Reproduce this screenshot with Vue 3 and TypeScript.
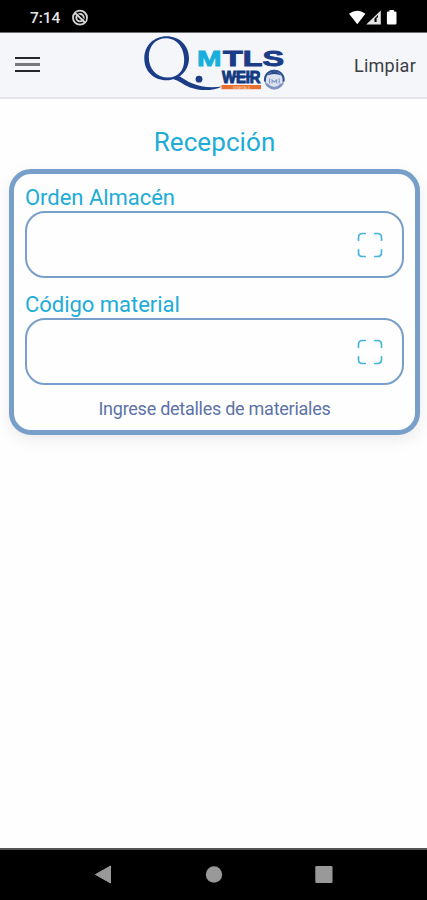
<script setup lang="ts">
import { ref } from 'vue'

interface Field {
  id: string
  label: string
}

const fields: Field[] = [
  { id: 'orden', label: 'Orden Almacén' },
  { id: 'codigo', label: 'Código material' },
]

const values = ref<Record<string, string>>({ orden: '', codigo: '' })

function clearFields(): void {
  values.value = { orden: '', codigo: '' }
}
</script>

<template>
  <div class="screen">
    <div class="status">
      <span class="clock">7:14</span>
      <svg class="status-badge" width="18" height="18" viewBox="0 0 18 18">
        <circle cx="9" cy="8.700" r="7" fill="none" stroke="#d6d6d6" stroke-width="1.800" />
        <circle cx="9" cy="8.700" r="3.700" fill="none" stroke="#d6d6d6" stroke-width="1.900" />
        <path d="M4 3.900L14 13.500" stroke="#d6d6d6" stroke-width="2" />
        <path d="M5.500 3.300L14.800 11.900" stroke="#000" stroke-width="0.900" />
      </svg>
      <svg class="status-icons" width="50" height="18" viewBox="0 0 50 18">
        <path d="M1 4.800Q9.300-1.200 17.400 4.800L9.300 15.200Z" fill="#fff" />
        <path d="M18.200 15.600L32.800 1.500V15.600Z" fill="#e2e2e2" />
        <path d="M26.500 13V9.500L30 6V8.500H28.600V13Z" fill="#000" />
        <path d="M41.500 1h4.400v1.400h1.200q1.400 0 1.400 1.400v10.400q0 1.400-1.400 1.400h-6.800q-1.400 0-1.400-1.400V3.800q0-1.400 1.400-1.400h1.200z" fill="#fff" />
      </svg>
    </div>

    <header class="toolbar">
      <button class="menu" aria-label="Menú">
        <span></span><span></span><span></span>
      </button>
      <svg class="logo" width="156" height="64" viewBox="136 33 156 64">
        <path
          fill="#1b3c87"
          fill-rule="evenodd"
          d="M166.500 36.200C179.500 36.200 189 45.500 189 58C189 71 179 80.300 166.500 80.300C153.500 80.300 144.300 71 144.300 58.500C144.300 45.500 154 36.200 166.500 36.200ZM166 38.200C155.500 38.200 148.800 46 148.800 57C148.800 69 156.500 77.600 168 77.600C178 77.600 184.200 70.500 184.200 60C184.200 47 176.500 38.200 166 38.200Z"
        />
        <path d="M174 77.500L180 76.500C188 82 200 89.500 222 86.500C212 91.500 200 90.800 190 87.500C183 84.500 179 80.500 174 79.500Z" fill="#1b3c87" />
        <circle cx="199" cy="79.200" r="3.400" fill="#1b3c87" />
        <text class="word main m" x="197" y="66.300" textLength="24.500" lengthAdjust="spacingAndGlyphs">M</text>
        <text class="word main tls" x="223" y="66.300" textLength="61" lengthAdjust="spacingAndGlyphs">TLS</text>
        <text class="word sub" x="222" y="82.600" textLength="38.500" lengthAdjust="spacingAndGlyphs">WEIR</text>
        <rect x="234" y="75.600" width="17" height="2" fill="#123a80" />
        <rect x="221.500" y="85" width="39.500" height="4.200" fill="#e8702c" />
        <text class="tiny" x="233" y="88.500" font-size="4" textLength="17" lengthAdjust="spacingAndGlyphs" fill="#f8d5bd">MINERALS</text>
        <circle cx="274.300" cy="79.700" r="9.300" fill="#dce3ef" stroke="#8ea2c8" stroke-width="1.400" />
        <path d="M265 81.500C263.500 67 285 67 283.600 81.500" fill="none" stroke="#2d4d91" stroke-width="2" />
        <path d="M267 75.500Q274.300 67.500 281.600 75.500Q274.300 72.500 267 75.500Z" fill="#2d4d91" />
        <path d="M266.500 84Q274.300 92 282 84" fill="none" stroke="#7d92be" stroke-width="2.200" />
        <path d="M269.500 83.500V78.500M272 83.500V80L274.300 82L276.600 80V83.500M279.200 83.500V78.500" fill="none" stroke="#8499c3" stroke-width="1.100" />
      </svg>
      <button class="clear" @click="clearFields">Limpiar</button>
    </header>

    <main class="content">
      <h1>Recepción</h1>
      <section class="card">
        <div v-for="field in fields" :key="field.id" class="field">
          <label :for="field.id">{{ field.label }}</label>
          <div class="box">
            <input :id="field.id" v-model="values[field.id]" type="text" autocomplete="off" />
            <svg width="26" height="26" viewBox="0 0 26 26" class="scan">
              <path d="M1.500 8.200V5.500Q1.500 1.500 5.500 1.500H8.200M17.800 1.500H20.500Q24.500 1.500 24.500 5.500V8.200M24.500 17.800V20.500Q24.500 24.500 20.500 24.500H17.800M8.200 24.500H5.500Q1.500 24.500 1.500 20.500V17.800" />
            </svg>
          </div>
        </div>
        <p class="hint">Ingrese detalles de materiales</p>
      </section>
    </main>

    <nav class="navbar">
      <svg width="18" height="20" viewBox="0 0 18 20"><path d="M1.500 9.500L16.500 1V18Z" fill="#999" stroke="#999" stroke-linejoin="round" /></svg>
      <svg width="18" height="18" viewBox="0 0 18 18"><circle cx="9" cy="8.500" r="8.200" fill="#999" /></svg>
      <svg width="18" height="18" viewBox="0 0 18 18"><rect x="0.300" y="0" width="17.200" height="17" rx="1.200" fill="#999" /></svg>
    </nav>
  </div>
</template>

<style>
body {
  background: #fefefe;
}
</style>

<style scoped>
.screen {
  box-sizing: border-box;
  width: 100%;
  height: 900px;
  display: flex;
  flex-direction: column;
  font-family: Roboto, sans-serif;
  background: #fefefe;
  overflow: hidden;
}
.status {
  flex: none;
  box-sizing: border-box;
  height: 33px;
  padding: 3px 29px 0 30px;
  display: flex;
  align-items: center;
  background: #000;
  color: #e4e4e4;
  border-bottom: 1px solid #6b6c6e;
}
.clock {
  width: 41px;
  font-size: 15.500px;
  font-weight: 500;
  letter-spacing: -0.100px;
}
.status-icons {
  margin-left: auto;
}
.toolbar {
  flex: none;
  box-sizing: border-box;
  height: 66px;
  padding: 0 11px 0 15px;
  display: grid;
  grid-template-columns: 121px 156px 1fr;
  align-items: center;
  background: #f4f6fa;
  border-bottom: 2px solid #e5e6e9;
}
.menu {
  width: 25px;
  padding: 0 0 1px;
  border: 0;
  background: none;
  display: flex;
  flex-direction: column;
  gap: 4px;
}
.menu span {
  height: 2px;
  background: #25272b;
}
.menu span:nth-child(2) {
  height: 3px;
  background: #77787c;
}
.logo {
  display: block;
}
.word {
  font-family: "Liberation Sans", sans-serif;
  font-weight: 700;
}
.main {
  font-size: 22.500px;
  stroke-width: 0.900px;
}
.m {
  fill: #17b0dc;
  stroke: #17b0dc;
}
.tls {
  fill: #1b3c87;
  stroke: #1b3c87;
}
.sub {
  font-size: 17px;
  fill: #123a80;
  stroke: #123a80;
  stroke-width: 1.100px;
}
.tiny {
  font-family: "Liberation Sans", sans-serif;
}
.clear {
  justify-self: end;
  padding: 0;
  border: 0;
  background: none;
  font: 400 18px Roboto, sans-serif;
  letter-spacing: 0.250px;
  color: #3b3d42;
}
.content {
  flex: 1;
  padding: 26px 7px 0 9px;
}
h1 {
  margin: 0;
  height: 44px;
  line-height: 34px;
  text-align: center;
  font-size: 26px;
  font-weight: 400;
  letter-spacing: 0.080px;
  color: #20acd8;
}
.card {
  box-sizing: border-box;
  height: 266px;
  padding: 11px 11px 0;
  border: 5px solid #779fca;
  border-radius: 22px;
  background: #fefefe;
  box-shadow: 0 5px 15px rgba(0, 0, 0, 0.080);
}
.field {
  height: 107px;
}
label {
  display: block;
  height: 26px;
  line-height: 26px;
  font-size: 22px;
  letter-spacing: -0.030px;
  color: #20acd8;
}
.box {
  box-sizing: border-box;
  height: 67px;
  padding: 0 19px 0 16px;
  display: flex;
  align-items: center;
  border: 2px solid #779fca;
  border-radius: 20px;
}
input {
  flex: 1;
  min-width: 0;
  height: 40px;
  padding: 0;
  border: 0;
  outline: 0;
  background: none;
  font: 400 20px Roboto, sans-serif;
  color: #35568f;
}
.scan {
  fill: none;
  stroke: #45b5d9;
  stroke-width: 1.700;
  stroke-linecap: round;
}
.hint {
  margin: 0;
  line-height: 19px;
  text-align: center;
  font-size: 18px;
  letter-spacing: -0.260px;
  color: #5c73a6;
}
.navbar {
  flex: none;
  box-sizing: border-box;
  height: 52px;
  padding: 0 94px;
  display: flex;
  justify-content: space-between;
  align-items: center;
  background: #000;
  border-top: 2px solid #555;
}
</style>
